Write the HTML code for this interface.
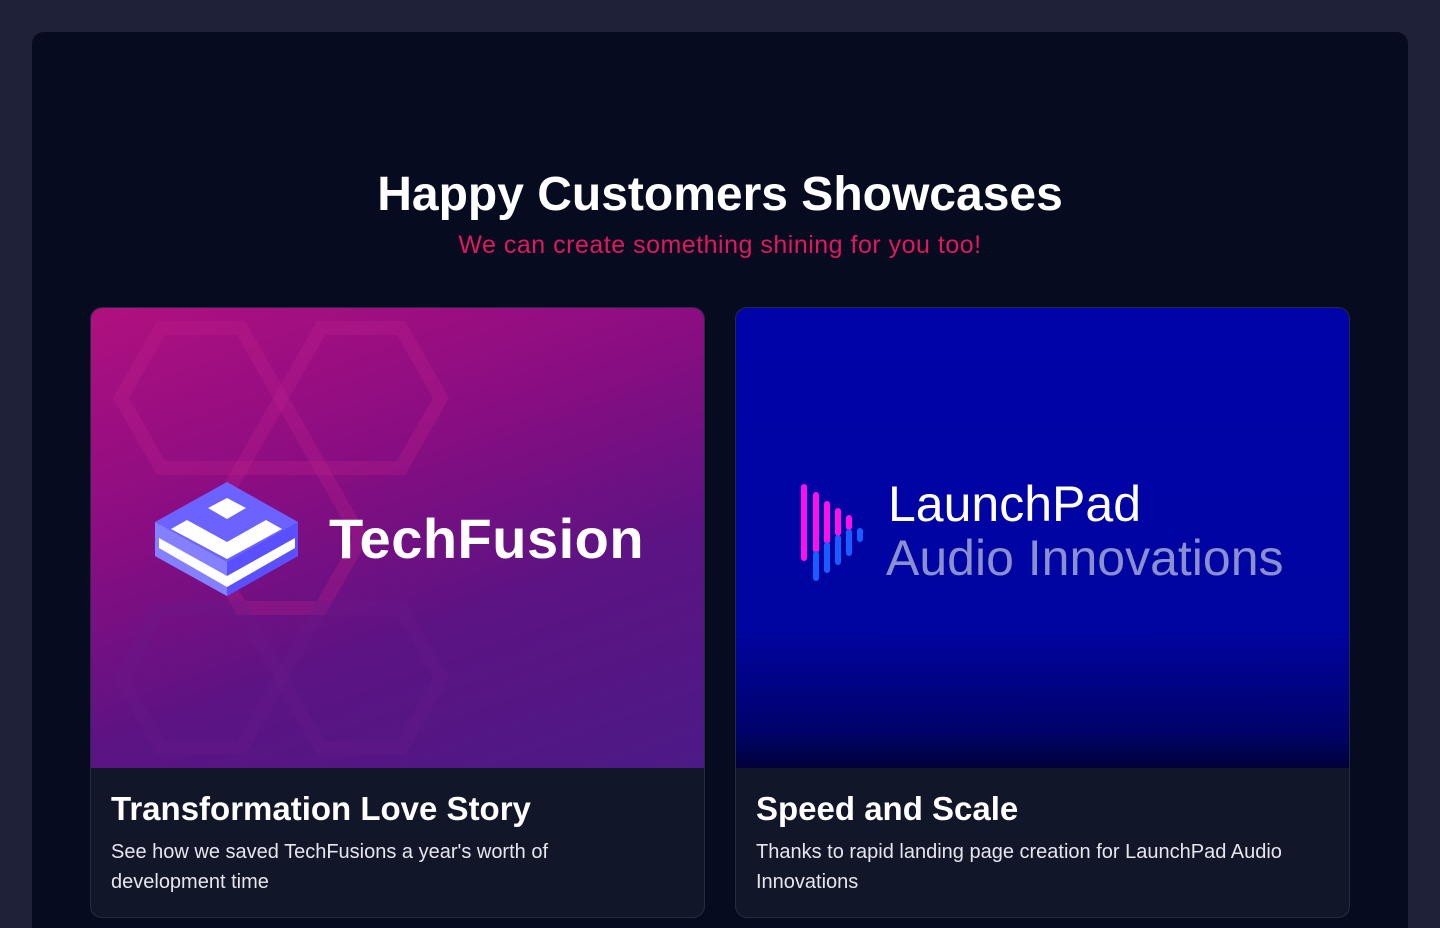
<!DOCTYPE html>
<html style="overflow:hidden;height:928px"><head><style>
*{margin:0;padding:0;box-sizing:border-box}
body{width:1440px;height:928px;background:#1f2139;font-family:"Liberation Sans",sans-serif;overflow:hidden;position:relative}
.panel{position:absolute;left:32px;top:32px;width:1376px;height:896px;background:#070b1f;border-radius:12px 12px 0 0}
h1{position:absolute;top:167px;left:0;width:1440px;text-align:center;color:#fff;font-size:48px;font-weight:700}
.sub{position:absolute;top:231px;left:0;width:1440px;text-align:center;color:#e0195f;font-size:25px;letter-spacing:0.5px}
.card{position:absolute;top:307px;width:615px;height:611px;border:1px solid #262a40;border-radius:12px;overflow:hidden;background:#121629}
.img{height:460px;position:relative;overflow:hidden}
.c1 .img{background:linear-gradient(160deg,#b0107f 0%,#8a0d82 35%,#5c1383 65%,#4c1a86 100%)}
.c2 .img{background:linear-gradient(180deg,#0003a8 0%,#0004a0 70%,#00026a 92%,#01013a 100%)}
.t{position:absolute;left:20px;top:482px;color:#fff;font-size:33px;font-weight:700}
.d{position:absolute;left:20px;top:529px;color:#e6e6ee;font-size:20px;line-height:30px;width:480px}
.c2 .d{width:570px}
</style></head><body>
<div class="panel"></div>
<h1>Happy Customers Showcases</h1>
<div class="sub">We can create something shining for you too!</div>
<div class="card c1" style="left:90px">
 <div class="img">
  <svg width="615" height="460" style="position:absolute;left:0;top:0">
   <g fill="none" stroke="#c0208a" stroke-opacity="0.3" stroke-width="14">
    <polygon points="70,20 150,20 190,90 150,160 70,160 30,90"/>
    <polygon points="230,20 310,20 350,90 310,160 230,160 190,90"/>
    <polygon points="150,160 230,160 270,230 230,300 150,300 110,230"/>
    <polygon points="70,300 150,300 190,370 150,440 70,440 30,370" stroke="#6a1a8a"/>
    <polygon points="230,300 310,300 350,370 310,440 230,440 190,370" stroke="#6a1a8a"/>
   </g>
   <polygon points="136,174 207,214 207,248 136,288 64,248 64,214" fill="#6b62ff"/>
   <polygon points="64,214 136,254 136,288 64,248" fill="#8480ff"/>
   <polygon points="136,254 207,214 207,248 136,288" fill="#5b50ff"/>
   <polygon points="117,200 136,190 155,200 136,211" fill="#fff"/>
   <polygon points="80,221 96,212 136,234 175,212 191,221 136,251" fill="#fff"/>
   <polygon points="68,230 68,240 136,279 204,240 204,230 136,268" fill="#fff"/>
  </svg>
  <div style="position:absolute;left:238px;top:198px;color:#fff;font-size:56px;font-weight:700;letter-spacing:0.5px">TechFusion</div>
 </div>
 <div class="t">Transformation Love Story</div>
 <div class="d">See how we saved TechFusions a year's worth of development time</div>
</div>
<div class="card c2" style="left:735px">
 <div class="img">
  <svg width="140" height="120" style="position:absolute;left:0;top:170px">
   <g stroke-linecap="round" stroke-width="6">
    <line x1="68" y1="9" x2="68" y2="80" stroke="#ff10e8"/>
    <line x1="80" y1="17" x2="80" y2="72" stroke="#ff10e8"/>
    <line x1="80" y1="76" x2="80" y2="100" stroke="#1a5cff"/>
    <line x1="91" y1="26" x2="91" y2="63" stroke="#ff10e8"/>
    <line x1="91" y1="67" x2="91" y2="92" stroke="#1a5cff"/>
    <line x1="102" y1="33" x2="102" y2="55" stroke="#ff10e8"/>
    <line x1="102" y1="60" x2="102" y2="84" stroke="#1a5cff"/>
    <line x1="113" y1="40" x2="113" y2="49" stroke="#ff10e8"/>
    <line x1="113" y1="54" x2="113" y2="75" stroke="#1a5cff"/>
    <line x1="124" y1="53" x2="124" y2="61" stroke="#1a5cff"/>
   </g>
  </svg>
  <div style="position:absolute;left:152px;top:168px;color:#fff;font-size:50px;line-height:56px">LaunchPad</div>
  <div style="position:absolute;left:150px;top:222px;color:#8a8fd0;font-size:50px;line-height:56px">Audio Innovations</div>
 </div>
 <div class="t">Speed and Scale</div>
 <div class="d">Thanks to rapid landing page creation for LaunchPad Audio Innovations</div>
</div>
</body></html>
